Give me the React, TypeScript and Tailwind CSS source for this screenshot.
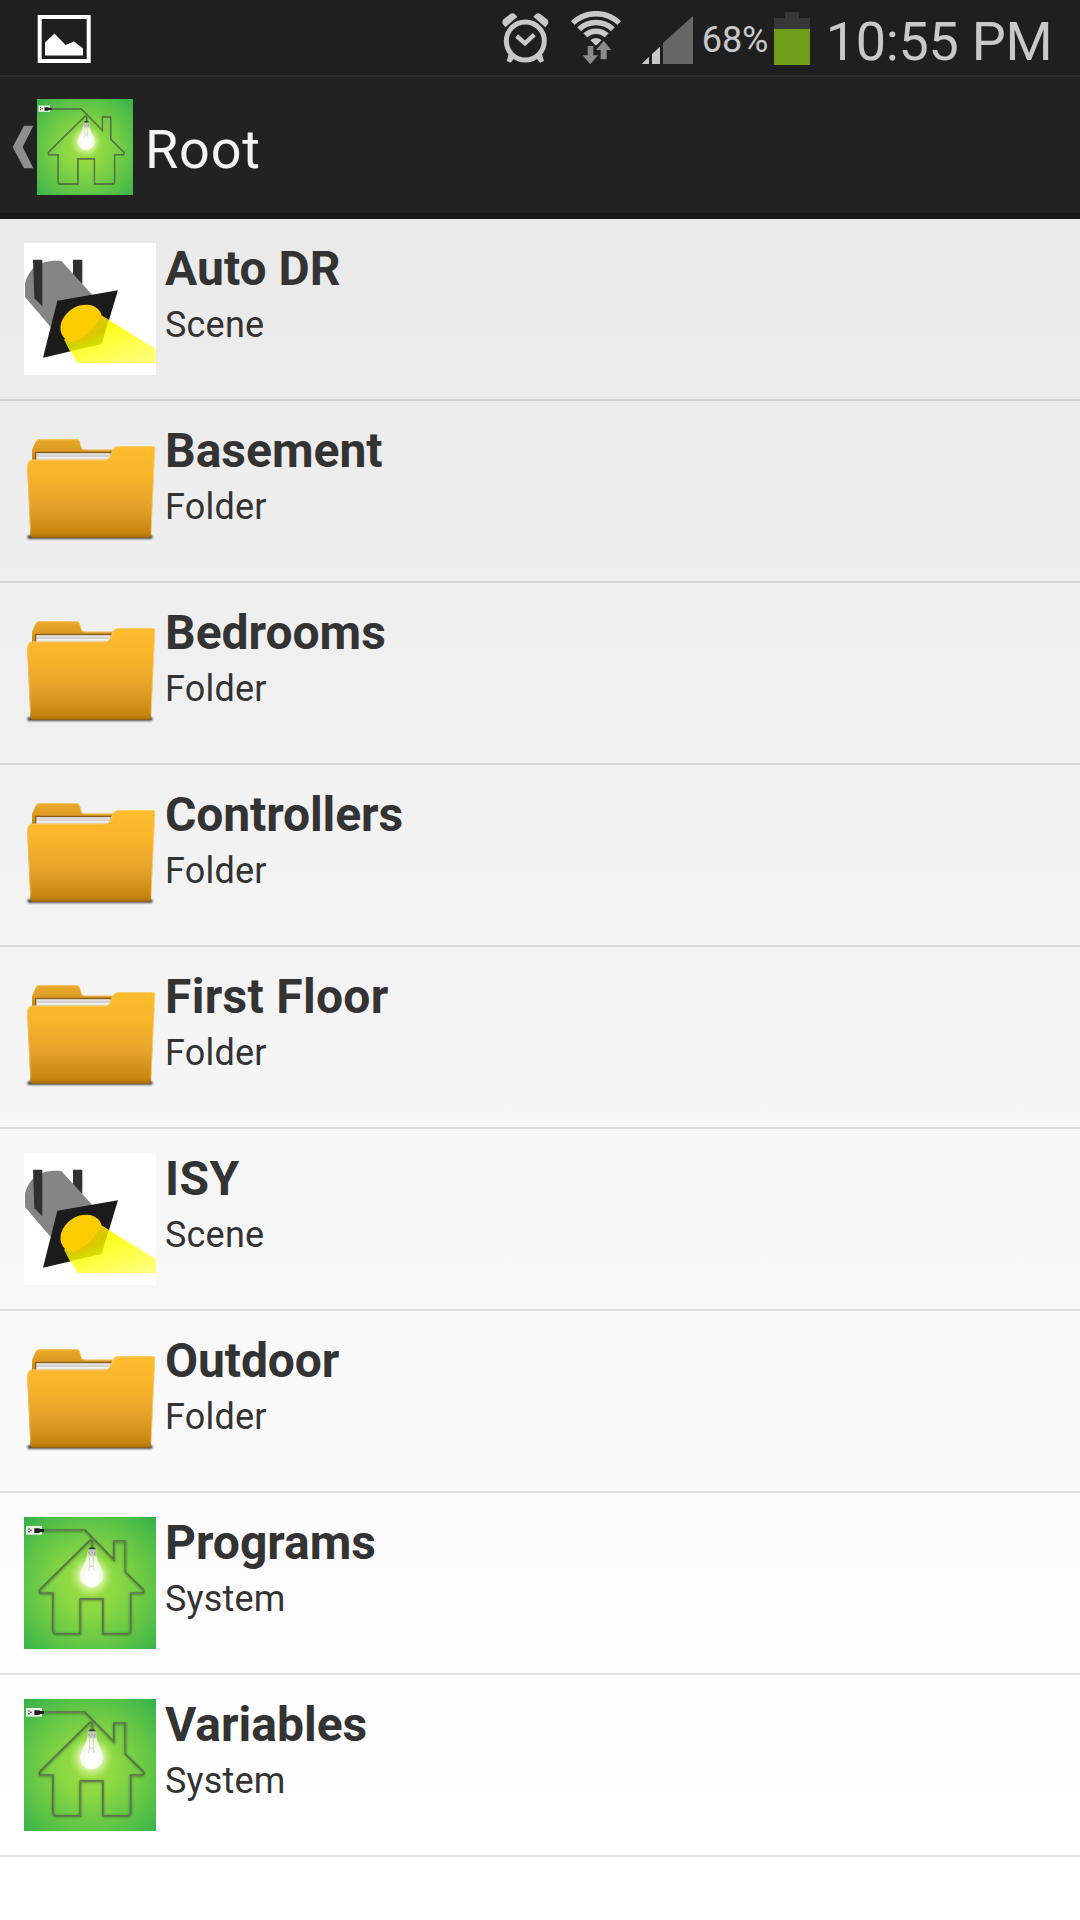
import React from "react";

type Kind = "Scene" | "Folder" | "System";

const items: { title: string; kind: Kind; tracking?: string }[] = [
  { title: "Auto DR", kind: "Scene" },
  { title: "Basement", kind: "Folder" },
  { title: "Bedrooms", kind: "Folder" },
  { title: "Controllers", kind: "Folder", tracking: "tracking-[-0.1px]" },
  { title: "First Floor", kind: "Folder", tracking: "tracking-[0.3px]" },
  { title: "ISY", kind: "Scene", tracking: "tracking-[0.4px]" },
  { title: "Outdoor", kind: "Folder", tracking: "tracking-[-0.1px]" },
  { title: "Programs", kind: "System" },
  { title: "Variables", kind: "System" },
];

function HouseIcon({ className }: { className: string }) {
  const id = React.useId();
  const cable =
    "M56 40H183L270 129V73H304V165L357 217Q363 225 355 229H320V340Q320 350 310 350H237V246H169V350H98Q87 350 87 338V229H50Q43 225 50 216L195 73Q204 66 205 76V96";
  return (
    <svg viewBox="0 0 396 396" className={className}>
      <defs>
        <radialGradient id={id + "bg"} cx="0.5" cy="0.52" r="0.72">
          <stop offset="0" stopColor="#9ee040" />
          <stop offset="0.3" stopColor="#8ad843" />
          <stop offset="0.65" stopColor="#62c546" />
          <stop offset="1" stopColor="#34b14b" />
        </radialGradient>
        <radialGradient id={id + "glow"}>
          <stop offset="0.45" stopColor="#f4ffd0" stopOpacity="0.85" />
          <stop offset="1" stopColor="#c8f080" stopOpacity="0" />
        </radialGradient>
        <radialGradient id={id + "bulb"} cx="0.5" cy="0.72" r="0.7">
          <stop offset="0.3" stopColor="#ffffff" />
          <stop offset="0.7" stopColor="#f4fae4" />
          <stop offset="1" stopColor="#d5e6b8" />
        </radialGradient>
        <filter id={id + "blur"} x="-10%" y="-10%" width="120%" height="120%">
          <feGaussianBlur stdDeviation="2.5" />
        </filter>
      </defs>
      <rect width="396" height="396" fill={`url(#${id}bg)`} />
      <path d={cable} transform="translate(0 2)" fill="none" stroke="#2c5a18" strokeOpacity="0.55" strokeWidth="6" filter={`url(#${id}blur)`} />
      <path d={cable} fill="none" stroke="#4c5c40" strokeWidth="4.5" />
      <path d={cable} transform="translate(0.5 0.5)" fill="none" stroke="#868f7e" strokeWidth="1.8" />
      <rect x="6" y="27" width="48" height="26" fill="#eef1ea" />
      <circle cx="15" cy="36" r="2.5" fill="#333" />
      <circle cx="15" cy="44" r="2.5" fill="#333" />
      <circle cx="21" cy="40" r="2.5" fill="#333" />
      <path d="M31 34H44L50 36H60V45H50L44 48H31Z" fill="#1c1f1a" />
      <circle cx="202" cy="176" r="66" fill={`url(#${id}glow)`} />
      <path d="M190 104H217C217 138 237 150 237 176A34.500 34.500 0 0 1 168 176C168 150 190 138 190 104Z" fill={`url(#${id}bulb)`} />
      <path d="M197 118V148H208V118M198 148L193 162M207 148L212 162" fill="none" stroke="#bfc4ae" strokeWidth="2" />
      <path d="M192 97H217L218 118H191Z" fill="#c9ccc0" />
      <path d="M198 91H210L216 97H193Z" fill="#3c4236" />
      <path d="M193 104L200 113M202 103L207 109M214 103L210 115" stroke="#93968a" strokeWidth="3" />
    </svg>
  );
}

function FolderIcon({ className }: { className: string }) {
  const id = React.useId();
  return (
    <svg viewBox="0 0 396 396" className={className}>
      <defs>
        <linearGradient id={id + "front"} x1="0" y1="0" x2="0" y2="1">
          <stop offset="0" stopColor="#febc2d" />
          <stop offset="0.3" stopColor="#f9b52c" />
          <stop offset="0.65" stopColor="#e6a329" />
          <stop offset="0.95" stopColor="#c5850e" />
          <stop offset="1" stopColor="#a86c04" />
        </linearGradient>
        <linearGradient id={id + "back"} x1="0" y1="0" x2="0" y2="1">
          <stop offset="0" stopColor="#eba92b" />
          <stop offset="0.55" stopColor="#dc9a22" />
          <stop offset="1" stopColor="#b97c12" />
        </linearGradient>
        <linearGradient id={id + "paper"} x1="0" y1="0" x2="0" y2="1">
          <stop offset="0" stopColor="#f4f4f4" />
          <stop offset="0.4" stopColor="#c9c9c9" />
          <stop offset="0.6" stopColor="#f2f2f2" />
          <stop offset="1" stopColor="#d2d2d2" />
        </linearGradient>
        <filter id={id + "blur"} x="-10%" y="-100%" width="120%" height="300%">
          <feGaussianBlur stdDeviation="3" />
        </filter>
      </defs>
      <rect x="10" y="331" width="376" height="10" rx="5" fill="#333" filter={`url(#${id}blur)`} />
      <path d="M24 108V75L35 50Q38 43 46 43H157Q165 43 167 50L172 68Q174 74 182 74H270V108Z" fill={`url(#${id}back)`} />
      <path d="M35 52Q38 44 46 44H157Q165 44 167 51L172 69Q174 75 182 75H268" fill="none" stroke="#f3c56b" strokeWidth="2.500" />
      <path d="M33 80H262V108H33Z" fill="#8a6220" />
      <path d="M37 85H260V106H37Z" fill={`url(#${id}paper)`} />
      <path d="M22 104Q14 105 10 116V134L19 331Q19 338 26 338H374Q381 338 381 331L393 68Q393 64 388 64H281Q274 64 269 70L257 96Q253 104 242 104Z" fill={`url(#${id}front)`} />
      <path d="M11 122Q13 105 24 105H242Q254 105 258 96L270 72Q275 65 282 65H388Q392 65 392 70L381 320" fill="none" stroke="#f8cf74" strokeWidth="2.500" />
      <path d="M11 130L20 320" fill="none" stroke="#f0bd57" strokeWidth="2.500" />
    </svg>
  );
}

function SpotlightIcon({ className }: { className: string }) {
  const id = React.useId();
  return (
    <svg viewBox="0 0 396 396" className={className}>
      <defs>
        <linearGradient id={id + "beam"} x1="0.2" y1="0.2" x2="0.8" y2="1">
          <stop offset="0" stopColor="#f6f600" />
          <stop offset="0.3" stopColor="#ffff28" />
          <stop offset="1" stopColor="#ffff78" />
        </linearGradient>
        <linearGradient id={id + "shade"} x1="0.35" y1="0.3" x2="0.65" y2="0.9">
          <stop offset="0" stopColor="#e2c800" />
          <stop offset="0.5" stopColor="#cfcd00" />
          <stop offset="1" stopColor="#dde000" />
        </linearGradient>
      </defs>
      <rect width="396" height="396" fill="#fff" />
      <path d="M147 50H175V125L147 100Z" fill="#303030" />
      <path d="M3 162V120C10 98 18 84 30 74C50 58 80 50 112 54L205 156L180 260L80 252Z" fill="#858585" />
      <path d="M27 50H55V190L31 166Z" fill="#303030" />
      <path d="M100 173L282 142L233 303L57 344Z" fill="#1b1b1b" />
      <path d="M234 218L396 319V360H160L121 290Z" fill={`url(#${id}beam)`} />
      <path d="M234 218L254 231L233 303L138 325L121 290Z" fill={`url(#${id}shade)`} />
      <ellipse cx="172" cy="242" rx="67" ry="52" transform="rotate(-34 172 242)" fill="#fccb00" />
      <path d="M234 218C238 262 205 302 137 299C180 290 205 262 234 218Z" fill="#e0c800" />
    </svg>
  );
}

function RowIcon({ kind }: { kind: Kind }) {
  const cls = "size-[132px] shrink-0";
  if (kind === "Scene") return <SpotlightIcon className={cls} />;
  if (kind === "Folder") return <FolderIcon className={cls} />;
  return <HouseIcon className={cls} />;
}

function StatusBar() {
  return (
    <div className="flex h-[75px] shrink-0 items-start bg-[#1f1f1f] text-[#c8c8c8]">
      <svg viewBox="0 0 54 48" className="mt-[15px] ml-[37px] h-12 w-[54px]">
        <rect x="2.700" y="2" width="49" height="44" fill="none" stroke="#fff" strokeWidth="4" />
        <path d="M8 27.500L17.500 18.500L28.500 30L37 26.500L46 33.500V40.500H8Z" fill="#fff" />
      </svg>
      <svg viewBox="0 0 140 156" className="mt-[13px] ml-[411px] h-[52px] w-[46.667px]">
        <g fill="#c8c8c8">
          <path d="M2 32Q-1 25 5 19L25 3Q32 -1 38 3L46 11L10 43Z" />
          <path d="M138 32Q141 25 135 19L115 3Q108 -1 102 3L94 11L130 43Z" />
          <path d="M20 123L38 134L26 149L14 144ZM120 123L102 134L114 149L126 144Z" />
        </g>
        <circle cx="70" cy="84" r="57" fill="none" stroke="#c8c8c8" strokeWidth="15" />
        <path d="M44 69L69 91L97 65" fill="none" stroke="#c8c8c8" strokeWidth="13" />
      </svg>
      <svg viewBox="0 0 156 162" className="mt-[11px] ml-[21px] h-[54px] w-[52px]">
        <clipPath id="wifi-wedge">
          <path d="M78 104L-10 18V-5H166V18Z" />
        </clipPath>
        <g clipPath="url(#wifi-wedge)">
          <g fill="none" stroke="#c8c8c8" strokeWidth="16.500">
            <circle cx="78" cy="108" r="100" />
            <circle cx="78" cy="108" r="73.500" />
            <circle cx="78" cy="108" r="47.500" />
          </g>
          <circle cx="78" cy="108" r="27" fill="#c8c8c8" />
        </g>
        <path d="M53 105H70V133H84L61 160L38 133H53Z" fill="#8a8a8a" />
        <path d="M101 89L124 117H110V145H92V117H78Z" fill="#8a8a8a" />
      </svg>
      <svg viewBox="0 0 156 144" className="mt-4 ml-[19px] h-12 w-[52px]">
        <path d="M2 144L24 122V144ZM33 114L57 92V144H33Z" fill="#c8c8c8" />
        <path d="M66 81L156 0V144H66Z" fill="#666" />
      </svg>
      <span className="mt-[19px] ml-[9px] w-[72.500px] text-[36px] leading-[42px]">68%</span>
      <svg viewBox="0 0 36 53" className="mt-3 h-[53px] w-9">
        <path d="M11 0H25V6H36V17H0V6H11Z" fill="#373737" />
        <rect y="17" width="36" height="36" fill="#6f9f18" />
      </svg>
      <span className="mt-[10px] ml-[15.500px] text-[54px] leading-[63px] tracking-[-0.3px] whitespace-nowrap">10:55 PM</span>
    </div>
  );
}

function ActionBar() {
  return (
    <div className="flex h-36 shrink-0 items-start border-t-2 border-b-6 border-t-[#2d2d2d] border-b-[#1a1a1a] bg-[#222]">
      <svg viewBox="0 0 66 132" className="mt-[48px] ml-3 h-11 w-[22px]">
        <path d="M36 2H64L32 66L64 130H36L2 66Z" fill="#8e8e8e" />
      </svg>
      <HouseIcon className="mt-[22px] ml-[3px] size-24 shrink-0" />
      <h1 className="mt-[41px] ml-[12px] text-[54px] leading-[63px] font-normal tracking-[0.8px] text-[#f3f3f3]">Root</h1>
    </div>
  );
}

export default function App() {
  return (
    <div className="flex h-[1920px] w-[1080px] flex-col overflow-hidden font-[Roboto,sans-serif]">
      <StatusBar />
      <ActionBar />
      <ul className="flex-1 bg-linear-to-b from-[#eaeaea] to-white to-95% text-[#333]">
        {items.map((item) => (
          <li key={item.title} className="flex h-[182px] items-start gap-[9px] border-b-2 border-black/10 pt-6 pl-6">
            <RowIcon kind={item.kind} />
            <div>
              <h2 className={`-mt-[2px] text-[48px] leading-[56px] font-bold ${item.tracking ?? ""}`}>{item.title}</h2>
              <p className="mt-[7px] text-[36px] leading-[42px] tracking-[0.2px]">{item.kind}</p>
            </div>
          </li>
        ))}
      </ul>
    </div>
  );
}
